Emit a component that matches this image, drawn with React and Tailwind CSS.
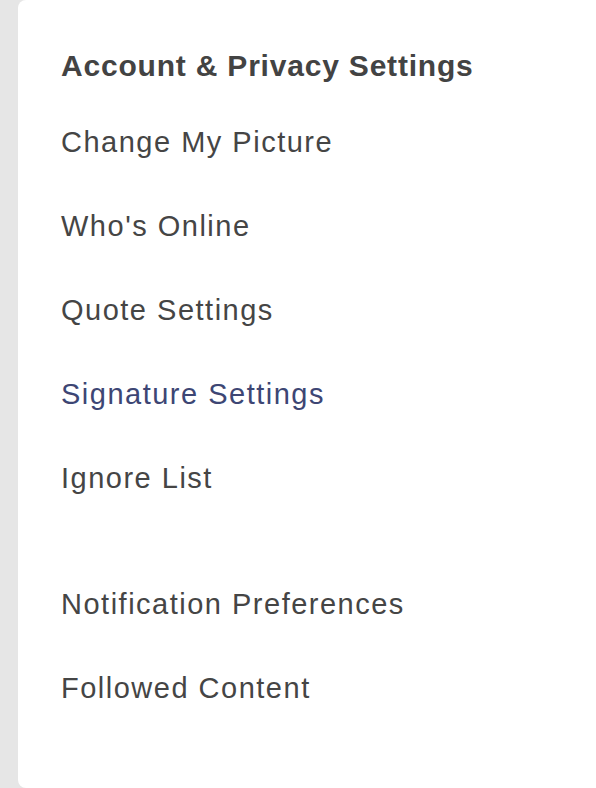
import React from 'react';

const linkClass = 'block leading-[84px] text-[29px] tracking-[1.5px] text-[#454545]';

export default function App() {
    return (
        <div className="flex h-[788px] w-full overflow-hidden bg-[#e6e6e6] pl-[18px] font-['Liberation_Sans',Arial,sans-serif]">
            <div className="flex-1 rounded-l-[8px] bg-white pl-[43px] pt-[46px]">
                <h2 className="mb-[14px] text-[30px] font-bold leading-[40px] tracking-[0.8px] text-[#434343]">
                    Account &amp; Privacy Settings
                </h2>
                <ul>
                    <li className={linkClass}>Change My Picture</li>
                    <li className={linkClass}>Who's Online</li>
                    <li className={linkClass}>Quote Settings</li>
                    <li className="block leading-[84px] text-[29px] tracking-[1.5px] text-[#3d4674]">Signature Settings</li>
                    <li className={linkClass}>Ignore List</li>
                </ul>
                <ul className="mt-[42px]">
                    <li className={linkClass}>Notification Preferences</li>
                    <li className={linkClass}>Followed Content</li>
                </ul>
            </div>
        </div>
    );
}
